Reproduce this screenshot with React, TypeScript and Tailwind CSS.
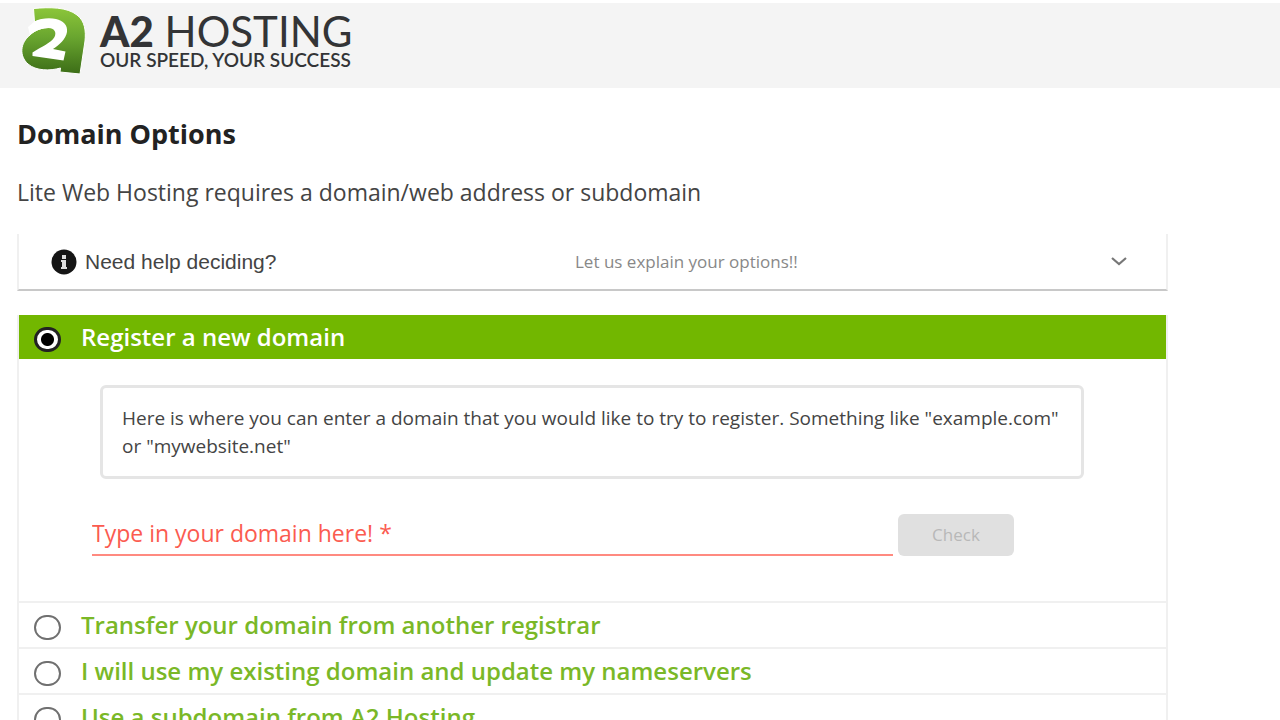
import { useState } from "react";

const options = [
  { id: "register", label: "Register a new domain" },
  { id: "transfer", label: "Transfer your domain from another registrar" },
  { id: "existing", label: "I will use my existing domain and update my nameservers" },
  { id: "subdomain", label: "Use a subdomain from A2 Hosting" },
];

function LogoMark() {
  return (
    <svg viewBox="0 0 68 68" className="h-[68px] w-[68px] shrink-0" aria-hidden="true">
      <defs>
        <linearGradient id="leaf" x1="0" y1="0" x2="0" y2="1">
          <stop offset="0" stopColor="#8cc63a" />
          <stop offset="0.45" stopColor="#69a52f" />
          <stop offset="1" stopColor="#3c6d17" />
        </linearGradient>
      </defs>
      <path
        d="M13.500 1.500 C30 0 47 0 57 8 C65 14 66 24 65 34 L60 67 L40 65 L40.500 61 C30 64 16 64 8 57 C-1 49 0 36 10 28 C15 23 22 20.500 30 20.500 L30 13 C24 12 19 13 14.500 15 Z"
        fill="url(#leaf)"
        stroke="#fff"
        strokeWidth="1"
      />
      <path
        d="M14.500 14.500 C21 11 30 10.500 36 12 C43 13.500 48 18 47 25 C46 32 39 38 33 42 L45.500 44.500 L43.500 53.500 L12.500 49 L12.500 45.500 C21 40 31 36 34.500 30 C37 25 34 21 28.500 21 C21 21 15 24 10 28 L8 20 Z"
        fill="#fff"
      />
    </svg>
  );
}

function Radio({ id, checked, onChange }: { id: string; checked: boolean; onChange: () => void }) {
  return (
    <input
      type="radio"
      id={id}
      name="domain-option"
      checked={checked}
      onChange={onChange}
      className="mt-1 h-[25px] w-[27px] shrink-0 appearance-none rounded-full border-2 border-[#707070] bg-white checked:border-[3px] checked:border-[#222] checked:bg-[radial-gradient(circle,#000_0_6px,#fff_7px)]"
    />
  );
}

export default function App() {
  const [selected, setSelected] = useState("register");
  const [domain, setDomain] = useState("");

  return (
    <div className="bg-white pt-[3px] font-['Open_Sans',sans-serif] text-[#444]">
      <header className="flex h-[85px] items-start gap-3 bg-[#f4f4f4] pt-1 pl-5">
        <LogoMark />
        <div className="pt-1 font-['Lato',sans-serif] whitespace-nowrap text-[#333436]">
          <div className="text-[42px] leading-10 font-normal">
            <span className="font-black">A2</span> HOSTING
          </div>
          <div className="text-[19px] leading-[18px] font-semibold">OUR SPEED, YOUR SUCCESS</div>
        </div>
      </header>

      <main className="mr-28 ml-[17px] pt-7">
        <h1 className="text-[27px] leading-9 font-bold text-[#222]">Domain Options</h1>
        <p className="mt-6 text-[23px] leading-8">
          Lite Web Hosting requires a domain/web address or subdomain
        </p>

        <button
          type="button"
          className="mt-[26px] flex h-[57px] w-full items-center border-x-2 border-b-2 border-x-[#f0f0f0] border-b-[#c8c8c8] pr-[38px] pl-8 text-left"
        >
          <svg viewBox="0 0 26 26" className="mr-2 h-[26px] w-[26px]" aria-hidden="true">
            <circle cx="13" cy="13" r="12.5" fill="#151515" />
            <path d="M11 6h4v4h-4z M10 11h5v7h1v2h-6v-2h1v-5h-1z" fill="#ddd" />
          </svg>
          <span className="w-[490px] font-['Liberation_Sans',sans-serif] text-[21px]">Need help deciding?</span>
          <span className="flex-1 text-[17px] text-[#888]">Let us explain your options!!</span>
          <svg viewBox="0 0 18 10" className="h-[10px] w-[18px]" fill="none" aria-hidden="true">
            <path d="M2 1 L9 7 L16 1" stroke="#777" strokeWidth="2.200" />
          </svg>
        </button>

        <div className="mt-6 border-x-2 border-[#f0f0f0]">
          {options.map((option) => {
            const active = option.id === selected;
            return (
              <section key={option.id}>
                <div
                  className={
                    active
                      ? "flex h-11 items-center gap-5 bg-[#72b700] pl-[15px] text-white"
                      : "flex h-[46px] items-center gap-5 border-t-2 border-[#f0f0f0] pl-[15px] text-[#7ab827]"
                  }
                >
                  <Radio id={option.id} checked={active} onChange={() => setSelected(option.id)} />
                  <label htmlFor={option.id} className="text-[24px] leading-8 font-semibold">
                    {option.label}
                  </label>
                </div>
                {active && (
                  <div className="pt-[26px] pr-[82px] pb-[45px] pl-[81px]">
                    <p className="rounded-md border-[3px] border-[#e5e5e5] px-[19px] py-[16px] text-[19px] leading-7">
                      Here is where you can enter a domain that you would like to try to register. Something like
                      "example.com" or "mywebsite.net"
                    </p>
                    <div className="-ml-2 mt-[35px] mr-[70px] flex items-end gap-[5px]">
                      <input
                        type="text"
                        aria-label="Type in your domain here!"
                        placeholder="Type in your domain here! *"
                        required
                        value={domain}
                        onChange={(event) => setDomain(event.target.value)}
                        className="h-10 min-w-0 flex-1 border-b-2 border-[#ff8a80] pb-1 text-[23px] text-[#444] outline-none placeholder:text-[#fb5b50] placeholder:opacity-100"
                      />
                      <button
                        type="button"
                        disabled
                        className="h-[42px] w-[116px] rounded-md bg-[#e0e0e0] text-[17px] text-[#b8b8b8]"
                      >
                        Check
                      </button>
                    </div>
                  </div>
                )}
              </section>
            );
          })}
        </div>
      </main>
    </div>
  );
}
